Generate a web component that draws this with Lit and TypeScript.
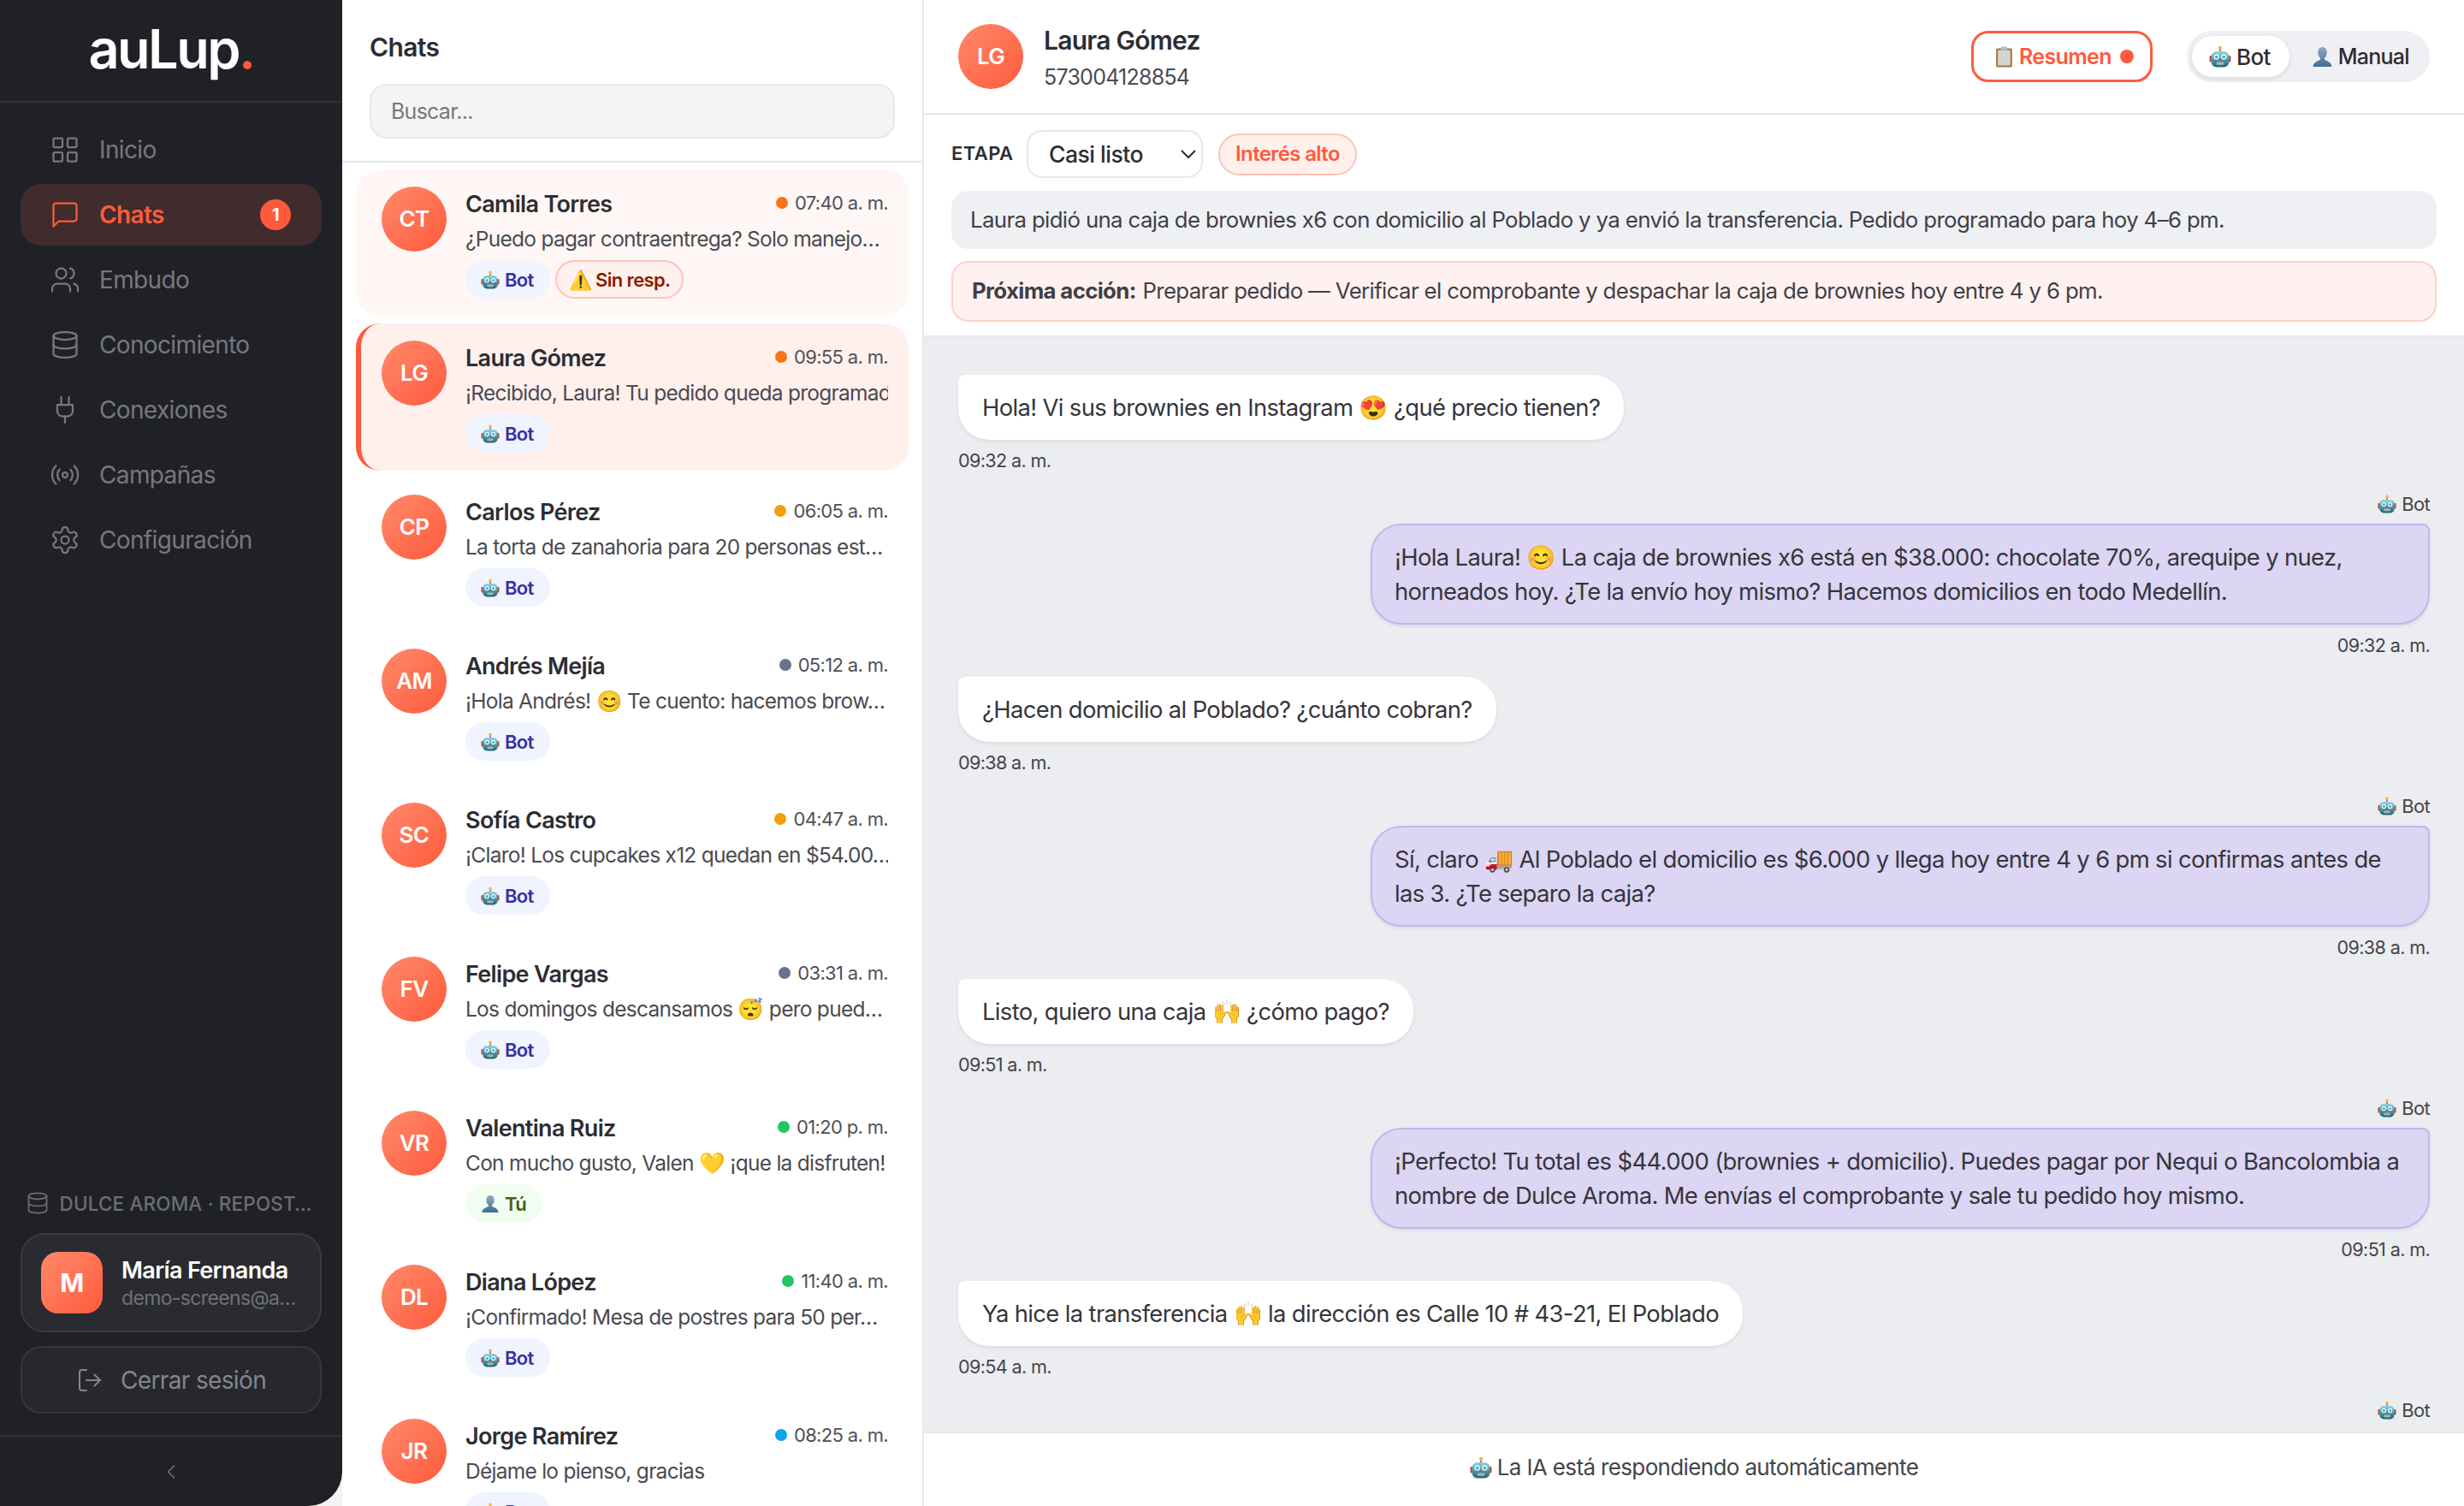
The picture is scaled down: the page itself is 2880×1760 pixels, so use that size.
import {LitElement, html, css, svg} from 'lit';
import {customElement} from 'lit/decorators.js';
import {classMap} from 'lit/directives/class-map.js';

const ICONS: Record<string, unknown> = {
  grid: svg`<rect x="3" y="3" width="7" height="7" rx="1"/><rect x="14" y="3" width="7" height="7" rx="1"/><rect x="14" y="14" width="7" height="7" rx="1"/><rect x="3" y="14" width="7" height="7" rx="1"/>`,
  chat: svg`<path d="M21 15a2 2 0 0 1-2 2H7l-4 4V5a2 2 0 0 1 2-2h14a2 2 0 0 1 2 2z"/>`,
  users: svg`<path d="M16 21v-2a4 4 0 0 0-4-4H6a4 4 0 0 0-4 4v2"/><circle cx="9" cy="7" r="4"/><path d="M22 21v-2a4 4 0 0 0-3-3.87"/><path d="M16 3.13a4 4 0 0 1 0 7.75"/>`,
  db: svg`<ellipse cx="12" cy="5" rx="9" ry="3"/><path d="M3 5V19A9 3 0 0 0 21 19V5"/><path d="M3 12A9 3 0 0 0 21 12"/>`,
  plug: svg`<path d="M12 22v-5"/><path d="M9 8V2"/><path d="M15 8V2"/><path d="M18 8v5a4 4 0 0 1-4 4h-4a4 4 0 0 1-4-4V8Z"/>`,
  radio: svg`<path d="M4.9 19.1C1 15.2 1 8.8 4.9 4.9"/><path d="M7.8 16.2c-2.3-2.3-2.3-6.1 0-8.5"/><circle cx="12" cy="12" r="2"/><path d="M16.2 7.8c2.3 2.3 2.3 6.1 0 8.5"/><path d="M19.1 4.9C23 8.8 23 15.1 19.1 19"/>`,
  gear: svg`<path d="M12.22 2h-.44a2 2 0 0 0-2 2v.18a2 2 0 0 1-1 1.73l-.43.25a2 2 0 0 1-2 0l-.15-.08a2 2 0 0 0-2.73.73l-.22.38a2 2 0 0 0 .73 2.73l.15.1a2 2 0 0 1 1 1.72v.51a2 2 0 0 1-1 1.74l-.15.09a2 2 0 0 0-.73 2.73l.22.38a2 2 0 0 0 2.73.73l.15-.08a2 2 0 0 1 2 0l.43.25a2 2 0 0 1 1 1.73V20a2 2 0 0 0 2 2h.44a2 2 0 0 0 2-2v-.18a2 2 0 0 1 1-1.73l.43-.25a2 2 0 0 1 2 0l.15.08a2 2 0 0 0 2.73-.73l.22-.39a2 2 0 0 0-.73-2.73l-.15-.08a2 2 0 0 1-1-1.74v-.5a2 2 0 0 1 1-1.74l.15-.09a2 2 0 0 0 .73-2.73l-.22-.38a2 2 0 0 0-2.73-.73l-.15.08a2 2 0 0 1-2 0l-.43-.25a2 2 0 0 1-1-1.73V4a2 2 0 0 0-2-2z"/><circle cx="12" cy="12" r="3"/>`,
  logout: svg`<path d="M9 21H5a2 2 0 0 1-2-2V5a2 2 0 0 1 2-2h4"/><polyline points="16 17 21 12 16 7"/><line x1="21" y1="12" x2="9" y2="12"/>`,
  back: svg`<path d="m15 18-6-6 6-6"/>`,
};

const icon = (name: string, size = 18) => html`<svg
  class="ico"
  width=${size}
  height=${size}
  viewBox="0 0 24 24"
  fill="none"
  stroke="currentColor"
  stroke-width="1.5"
  stroke-linecap="round"
  stroke-linejoin="round"
>${ICONS[name]}</svg>`;

// small pictograms for the robot, person and clipboard emoji
const robot = html`<svg class="emo" viewBox="0 0 24 24">
  <defs>
    <linearGradient id="rb" x1="0" y1="0" x2="0" y2="1">
      <stop offset="0" stop-color="#9bd3dd" />
      <stop offset="0.5" stop-color="#4f9bab" />
      <stop offset="1" stop-color="#1f6474" />
    </linearGradient>
  </defs>
  <rect x="11" y="2.5" width="2" height="5" fill="#8d82a6" />
  <circle cx="12" cy="2.6" r="2" fill="#f6b73c" />
  <rect x="0.5" y="11" width="3" height="7" rx="1.2" fill="#c9463d" />
  <rect x="20.5" y="11" width="3" height="7" rx="1.2" fill="#c9463d" />
  <rect x="2.5" y="6.5" width="19" height="17" rx="5.5" fill="url(#rb)" />
  <circle cx="8" cy="12.5" r="3" fill="#e8fbff" />
  <circle cx="16" cy="12.5" r="3" fill="#e8fbff" />
  <circle cx="8" cy="12.5" r="1.7" fill="#27b6dc" />
  <circle cx="16" cy="12.5" r="1.7" fill="#27b6dc" />
  <path d="M12 13.5l1.4 2.6h-2.8z" fill="#d9413a" />
  <rect x="8" y="18" width="8" height="3" rx="1" fill="#a9b4b8" />
</svg>`;

const person = html`<svg class="emo" viewBox="0 0 24 24">
  <defs>
    <linearGradient id="pb" x1="0" y1="0" x2="0" y2="1">
      <stop offset="0" stop-color="#8fa9c4" />
      <stop offset="1" stop-color="#3f6c99" />
    </linearGradient>
  </defs>
  <path
    d="M12 1c3.2 0 5 2.7 5 6 0 2.7-1.100 5.100-2.700 6.300v1.700c2.300 1.300 7.700 2.400 8.200 8H1.500c.5-5.600 5.900-6.700 8.200-8v-1.700C8.100 12.100 7 9.700 7 7c0-3.300 1.800-6 5-6z"
    fill="url(#pb)"
  />
</svg>`;

const clipboard = html`<svg class="emo" viewBox="0 0 24 24">
  <rect x="3" y="2.500" width="18" height="21" rx="1.500" fill="#a9783f" />
  <rect x="5" y="4.500" width="14" height="17" fill="#d4d4d4" />
  <rect x="8.500" y="0.500" width="7" height="4" rx="1" fill="#b9bcc0" />
</svg>`;

const NAV = [
  ['grid', 'Inicio'],
  ['chat', 'Chats'],
  ['users', 'Embudo'],
  ['db', 'Conocimiento'],
  ['plug', 'Conexiones'],
  ['radio', 'Campañas'],
  ['gear', 'Configuración'],
];

const ORANGE = '#f97316';
const AMBER = '#f59e0b';
const SLATE = '#64748b';
const GREEN = '#22c55e';
const SKY = '#0ea5e9';

const CHATS = [
  {ini: 'CT', name: 'Camila Torres', time: '07:40 a. m.', dot: ORANGE, text: '¿Puedo pagar contraentrega? Solo manejo…', tag: 'bot', alert: true, unread: true},
  {ini: 'LG', name: 'Laura Gómez', time: '09:55 a. m.', dot: ORANGE, text: '¡Recibido, Laura! Tu pedido queda programado', tag: 'bot', active: true},
  {ini: 'CP', name: 'Carlos Pérez', time: '06:05 a. m.', dot: AMBER, text: 'La torta de zanahoria para 20 personas est…', tag: 'bot'},
  {ini: 'AM', name: 'Andrés Mejía', time: '05:12 a. m.', dot: SLATE, text: '¡Hola Andrés! 😊 Te cuento: hacemos brow…', tag: 'bot'},
  {ini: 'SC', name: 'Sofía Castro', time: '04:47 a. m.', dot: AMBER, text: '¡Claro! Los cupcakes x12 quedan en $54.00…', tag: 'bot'},
  {ini: 'FV', name: 'Felipe Vargas', time: '03:31 a. m.', dot: SLATE, text: 'Los domingos descansamos 😴 pero pued…', tag: 'bot'},
  {ini: 'VR', name: 'Valentina Ruiz', time: '01:20 p. m.', dot: GREEN, text: 'Con mucho gusto, Valen 💛 ¡que la disfruten!', tag: 'me'},
  {ini: 'DL', name: 'Diana López', time: '11:40 a. m.', dot: GREEN, text: '¡Confirmado! Mesa de postres para 50 per…', tag: 'bot'},
  {ini: 'JR', name: 'Jorge Ramírez', time: '08:25 a. m.', dot: SKY, text: 'Déjame lo pienso, gracias', tag: 'bot'},
];

const MESSAGES = [
  {bot: false, time: '09:32 a. m.', lines: ['Hola! Vi sus brownies en Instagram 😍 ¿qué precio tienen?']},
  {bot: true, time: '09:32 a. m.', lines: ['¡Hola Laura! 😊 La caja de brownies x6 está en $38.000: chocolate 70%, arequipe y nuez,', 'horneados hoy. ¿Te la envío hoy mismo? Hacemos domicilios en todo Medellín.']},
  {bot: false, time: '09:38 a. m.', lines: ['¿Hacen domicilio al Poblado? ¿cuánto cobran?']},
  {bot: true, time: '09:38 a. m.', lines: ['Sí, claro 🚚 Al Poblado el domicilio es $6.000 y llega hoy entre 4 y 6 pm si confirmas antes de', 'las 3. ¿Te separo la caja?']},
  {bot: false, time: '09:51 a. m.', lines: ['Listo, quiero una caja 🙌 ¿cómo pago?']},
  {bot: true, time: '09:51 a. m.', lines: ['¡Perfecto! Tu total es $44.000 (brownies + domicilio). Puedes pagar por Nequi o Bancolombia a', 'nombre de Dulce Aroma. Me envías el comprobante y sale tu pedido hoy mismo.']},
  {bot: false, time: '09:54 a. m.', lines: ['Ya hice la transferencia 🙌 la dirección es Calle 10 # 43-21, El Poblado']},
  {bot: true, time: '', lines: []},
];

@customElement('app-root')
export class AppRoot extends LitElement {
  static override styles = css`
    :host {
      display: block;
      zoom: 2;
      width: 1440px;
      height: 880px;
      overflow: hidden;
      background: #f4f4f2;
      color: #2d2d33;
      font-family: 'Inter', 'Noto Sans', sans-serif;
      letter-spacing: -0.02em;
    }
    * {
      box-sizing: border-box;
    }
    .ico {
      flex: none;
    }
    .emo {
      flex: none;
      display: inline-block;
      width: 1em;
      height: 1em;
    }
    .shell {
      display: flex;
      height: 880px;
    }

    /* sidebar */
    .side {
      width: 200px;
      flex: none;
      display: flex;
      flex-direction: column;
      background: #202127;
      border-bottom-right-radius: 20px;
      color: #77787e;
    }
    .logo {
      height: 60px;
      flex: none;
      display: flex;
      align-items: center;
      justify-content: center;
      border-bottom: 1px solid #323339;
      font-size: 31.5px;
      font-weight: 600;
      letter-spacing: -0.04em;
      color: #fff;
      padding-bottom: 2px;
    }
    .logo b {
      font-weight: 600;
      color: #ff5a3c;
    }
    .nav {
      display: flex;
      flex-direction: column;
      gap: 2px;
      padding: 9.25px 12px 0;
    }
    .nav-item {
      height: 36px;
      display: flex;
      align-items: center;
      gap: 11px;
      padding: 0 18px 0 17px;
      border-radius: 12px;
      font-size: 14px;
    }
    .nav-item.on {
      background: #402c2c;
      color: #ff5a3c;
      font-weight: 600;
    }
    .badge {
      margin-left: auto;
      width: 18px;
      height: 18px;
      border-radius: 50%;
      background: #ff5a3c;
      color: #fff;
      font-size: 10px;
      font-weight: 700;
      display: flex;
      align-items: center;
      justify-content: center;
    }
    .side-foot {
      margin-top: auto;
      padding: 0 12px;
    }
    .biz {
      display: flex;
      align-items: center;
      gap: 6px;
      padding-left: 2.75px;
      height: 16px;
      font-size: 11.2px;
      font-weight: 500;
      letter-spacing: 0.01em;
      color: #6c6e75;
      margin-bottom: 9.5px;
      white-space: nowrap;
    }
    .user {
      height: 58px;
      display: flex;
      align-items: center;
      gap: 11px;
      padding: 0 11px;
      border: 1px solid #3a3b41;
      border-radius: 14px;
      background: #2a2b31;
    }
    .user-av {
      width: 36px;
      height: 36px;
      flex: none;
      border-radius: 10px;
      background: linear-gradient(135deg, #ff8a6b, #ff5a3c);
      color: #fff;
      font-weight: 700;
      font-size: 15px;
      display: flex;
      align-items: center;
      justify-content: center;
    }
    .user-info {
      min-width: 0;
      white-space: nowrap;
    }
    .user-name {
      font-size: 13.5px;
      font-weight: 600;
      color: #fff;
      line-height: 17px;
      margin-top: 1px;
    }
    .user-mail {
      font-size: 11.5px;
      color: #6f7178;
      line-height: 15px;
    }
    .logout {
      margin-top: 8px;
      height: 39.5px;
      display: flex;
      align-items: center;
      justify-content: center;
      gap: 10px;
      border: 1px solid #36373d;
      border-radius: 12px;
      background: #27282e;
      color: #85868c;
      font-size: 14px;
    }
    .collapse {
      margin-top: 12.5px;
      height: 41.5px;
      flex: none;
      display: flex;
      align-items: center;
      justify-content: center;
      border-top: 1px solid #323339;
      color: #6c6e75;
    }

    /* chat list */
    .list {
      width: 340px;
      flex: none;
      display: flex;
      flex-direction: column;
      background: #fff;
      border-right: 1px solid #e8e8ec;
    }
    .list-head {
      flex: none;
      height: 95px;
      padding: 17.5px 16px 0;
      border-bottom: 1px solid #e8e8ec;
    }
    .list-title {
      font-size: 15px;
      font-weight: 600;
      line-height: 20px;
    }
    .search {
      margin-top: 11.5px;
      height: 32px;
      display: flex;
      align-items: center;
      padding: 0 11.5px;
      background: #f4f4f2;
      border: 1px solid #e8e8ec;
      border-radius: 10px;
      font-size: 12.5px;
      letter-spacing: -0.03em;
      color: #77777a;
    }
    .items {
      flex: 1;
      overflow: hidden;
      display: flex;
      flex-direction: column;
      gap: 4px;
      padding: 4px 8px;
    }
    .item {
      flex: none;
      height: 86px;
      display: flex;
      gap: 11px;
      padding: 10px 12px;
      border-left: 3px solid transparent;
      border-radius: 14px;
    }
    .item.unread {
      background: #fff7f5;
    }
    .item.on {
      background: #fff0ec;
      border-left-color: #ff5a3c;
    }
    .av {
      width: 38px;
      height: 38px;
      flex: none;
      border-radius: 50%;
      background: linear-gradient(135deg, #ff8a6b, #ff5a3c);
      color: #fff;
      font-size: 13px;
      font-weight: 600;
      padding-bottom: 0.5px;
      display: flex;
      align-items: center;
      justify-content: center;
    }
    .item-body {
      flex: 1;
      min-width: 0;
    }
    .item-top {
      height: 20px;
      display: flex;
      align-items: center;
      justify-content: space-between;
    }
    .item-name {
      font-size: 13.5px;
      font-weight: 600;
      letter-spacing: -0.025em;
    }
    .item-time {
      display: flex;
      align-items: center;
      gap: 4px;
      padding-bottom: 1px;
      font-size: 11px;
      letter-spacing: -0.03em;
      color: #4f4f57;
    }
    .dot {
      width: 7px;
      height: 7px;
      border-radius: 50%;
    }
    .item-text {
      margin-top: 1.5px;
      height: 18px;
      line-height: 18px;
      font-size: 12.25px;
      letter-spacing: -0.03em;
      color: #4a4a52;
      white-space: nowrap;
      overflow: hidden;
    }
    .tags {
      margin-top: 3.5px;
      display: flex;
      gap: 3px;
    }
    .tag {
      height: 22.5px;
      display: flex;
      align-items: center;
      gap: 3px;
      padding: 0 9.5px 0 9px;
      border-radius: 999px;
      font-size: 11px;
      font-weight: 600;
    }
    .tag.bot {
      background: #f0f4ff;
      color: #3730a3;
    }
    .tag.me {
      background: #f0fdf0;
      color: #3f6212;
    }
    .tag.alert {
      padding: 0 7px;
      background: #fff1ee;
      border: 1px solid #ffc4b5;
      color: #8b1a00;
    }

    /* conversation */
    .main {
      flex: 1;
      min-width: 0;
      display: flex;
      flex-direction: column;
      background: #fff;
    }
    .head {
      flex: none;
      height: 67px;
      display: flex;
      align-items: center;
      gap: 12px;
      padding: 0 20px;
      border-bottom: 1px solid #e8e8ec;
    }
    .head-name {
      font-size: 15px;
      font-weight: 600;
      letter-spacing: -0.025em;
      line-height: 22px;
    }
    .head-phone {
      margin-top: 1.5px;
      font-size: 12.5px;
      letter-spacing: -0.03em;
      line-height: 18px;
      color: #4a4a52;
    }
    .summary-btn {
      margin-left: auto;
      width: 106px;
      height: 30px;
      display: flex;
      align-items: center;
      gap: 2.5px;
      padding-left: 11.5px;
      border: 1.5px solid #ff5a3c;
      border-radius: 10px;
      color: #ff5a3c;
      font-size: 12.5px;
      font-weight: 600;
    }
    .summary-btn i {
      width: 8px;
      height: 8px;
      margin-left: 2.5px;
      border-radius: 50%;
      background: #ff5a3c;
    }
    .mode {
      margin-left: 8px;
      height: 30px;
      width: 142px;
      flex: none;
      display: flex;
      align-items: center;
      padding: 3px;
      background: #eff0f4;
      border-radius: 999px;
      font-size: 13px;
      font-weight: 500;
    }
    .mode span {
      height: 24px;
      display: flex;
      align-items: center;
      gap: 3px;
      padding: 0 11px 0 10px;
      border-radius: 999px;
      white-space: nowrap;
    }
    .mode span + span {
      padding-left: 13px;
      font-size: 12.5px;
      letter-spacing: -0.03em;
    }
    .mode .sel {
      background: #fff;
      box-shadow: 0 1px 3px rgba(0, 0, 0, 0.1);
    }
    .meta {
      flex: none;
      height: 130px;
      padding: 9px 16px 0;
      border-bottom: 1px solid #e8e8ec;
    }
    .stage {
      height: 28px;
      display: flex;
      align-items: center;
    }
    .stage label {
      width: 44px;
      padding-bottom: 1px;
      font-size: 11px;
      font-weight: 600;
      letter-spacing: 0.02em;
    }
    .stage select {
      width: 103px;
      height: 28px;
      padding: 0 6px 0 8px;
      background: #fff;
      border: 1px solid #e8e8ec;
      border-radius: 9px;
      color: #2d2d33;
      font: inherit;
      font-size: 13.3px;
      font-weight: 500;
      letter-spacing: -0.02em;
    }
    .interest {
      margin-left: 9px;
      height: 24.5px;
      width: 81px;
      padding-bottom: 1px;
      display: flex;
      align-items: center;
      justify-content: center;
      background: #fff0ec;
      border: 1px solid #ffc4b5;
      border-radius: 999px;
      color: #ff5a3c;
      font-size: 12px;
      font-weight: 600;
    }
    .note {
      margin-top: 7.5px;
      height: 34px;
      display: flex;
      align-items: center;
      padding: 0 11px 1px;
      background: #eff0f4;
      border-radius: 10px;
      font-size: 12.9px;
      color: #3f3f46;
    }
    .next {
      margin-top: 7px;
      height: 35.5px;
      display: flex;
      align-items: center;
      gap: 0.3em;
      padding: 0 11px 1px;
      background: #fff1f0;
      border: 1px solid #ffd0c8;
      border-radius: 10px;
      font-size: 12.9px;
      color: #3f3f46;
    }
    .next b {
      font-weight: 700;
    }
    .msgs {
      flex: 1;
      min-height: 0;
      overflow: hidden;
      display: flex;
      flex-direction: column;
      gap: 11.5px;
      padding: 22px 20px 0 20px;
      background: #ecedf1;
    }
    .msg {
      display: flex;
      flex-direction: column;
      align-items: flex-start;
    }
    .msg.bot {
      align-items: flex-end;
    }
    .who {
      height: 14px;
      margin-bottom: 4.5px;
      display: flex;
      align-items: center;
      gap: 3px;
      font-size: 11px;
      color: #44444b;
    }
    .bubble {
      padding: 9px 14px;
      background: #fff;
      border-radius: 4px 18px 18px 18px;
      font-size: 13.7px;
      line-height: 20px;
      color: #35353c;
      box-shadow: 0 1px 2px rgba(0, 0, 0, 0.08);
      white-space: nowrap;
    }
    .msg.bot .bubble {
      width: 619px;
      padding: 8.5px 13px;
      background: #dcd5f3;
      border: 1px solid #c4b5f0;
      border-radius: 18px 4px 18px 18px;
    }
    .stamp {
      margin-top: 5px;
      height: 14px;
      line-height: 14px;
      font-size: 10.8px;
      letter-spacing: -0.03em;
      color: #44444b;
    }
    .foot {
      flex: none;
      height: 43.5px;
      display: flex;
      align-items: center;
      justify-content: center;
      gap: 3px;
      padding-bottom: 3px;
      background: #fff;
      border-top: 1px solid #e8e8ec;
      font-size: 13px;
      color: #44444b;
    }
  `;

  private renderChat(c: (typeof CHATS)[number]) {
    return html`<div class=${classMap({item: true, on: !!c.active, unread: !!c.unread})}>
      <div class="av">${c.ini}</div>
      <div class="item-body">
        <div class="item-top">
          <span class="item-name">${c.name}</span>
          <span class="item-time">
            <span class="dot" style="background:${c.dot}"></span>${c.time}
          </span>
        </div>
        <div class="item-text">${c.text}</div>
        <div class="tags">
          ${c.tag === 'bot'
            ? html`<span class="tag bot">${robot}Bot</span>`
            : html`<span class="tag me">${person}Tú</span>`}
          ${c.alert ? html`<span class="tag alert">⚠️ Sin resp.</span>` : ''}
        </div>
      </div>
    </div>`;
  }

  private renderMsg(m: (typeof MESSAGES)[number]) {
    return html`<div class=${classMap({msg: true, bot: m.bot})}>
      ${m.bot ? html`<div class="who">${robot}Bot</div>` : ''}
      ${m.lines.length
        ? html`<div class="bubble">${m.lines.map((l, i) => html`${i ? html`<br />` : ''}${l}`)}</div>
            <div class="stamp">${m.time}</div>`
        : ''}
    </div>`;
  }

  override render() {
    return html`<div class="shell">
      <aside class="side">
        <div class="logo">auLup<b>.</b></div>
        <nav class="nav">
          ${NAV.map(
            ([ic, label]) => html`<div class=${classMap({'nav-item': true, on: label === 'Chats'})}>
              ${icon(ic)}<span>${label}</span>
              ${label === 'Chats' ? html`<span class="badge">1</span>` : ''}
            </div>`
          )}
        </nav>
        <div class="side-foot">
          <div class="biz">${icon('db', 14)}<span>DULCE AROMA · REPOST…</span></div>
          <div class="user">
            <div class="user-av">M</div>
            <div class="user-info">
              <div class="user-name">María Fernanda</div>
              <div class="user-mail">demo-screens@a…</div>
            </div>
          </div>
          <div class="logout">${icon('logout', 16)}<span>Cerrar sesión</span></div>
        </div>
        <div class="collapse">${icon('back', 14)}</div>
      </aside>

      <section class="list">
        <div class="list-head">
          <div class="list-title">Chats</div>
          <div class="search">Buscar...</div>
        </div>
        <div class="items">${CHATS.map((c) => this.renderChat(c))}</div>
      </section>

      <section class="main">
        <header class="head">
          <div class="av">LG</div>
          <div>
            <div class="head-name">Laura Gómez</div>
            <div class="head-phone">573004128854</div>
          </div>
          <div class="summary-btn">${clipboard}<span>Resumen</span><i></i></div>
          <div class="mode"><span class="sel">${robot}Bot</span><span>${person}Manual</span></div>
        </header>
        <div class="meta">
          <div class="stage">
            <label>ETAPA</label>
            <select><option>Casi listo</option></select>
            <span class="interest">Interés alto</span>
          </div>
          <div class="note">
            Laura pidió una caja de brownies x6 con domicilio al Poblado y ya envió la transferencia. Pedido programado para hoy 4–6 pm.
          </div>
          <div class="next">
            <b>Próxima acción:</b> Preparar pedido — Verificar el comprobante y despachar la caja de brownies hoy entre 4 y 6 pm.
          </div>
        </div>
        <div class="msgs">${MESSAGES.map((m) => this.renderMsg(m))}</div>
        <div class="foot">${robot}<span>La IA está respondiendo automáticamente</span></div>
      </section>
    </div>`;
  }
}

declare global {
  interface HTMLElementTagNameMap {
    'app-root': AppRoot;
  }
}
